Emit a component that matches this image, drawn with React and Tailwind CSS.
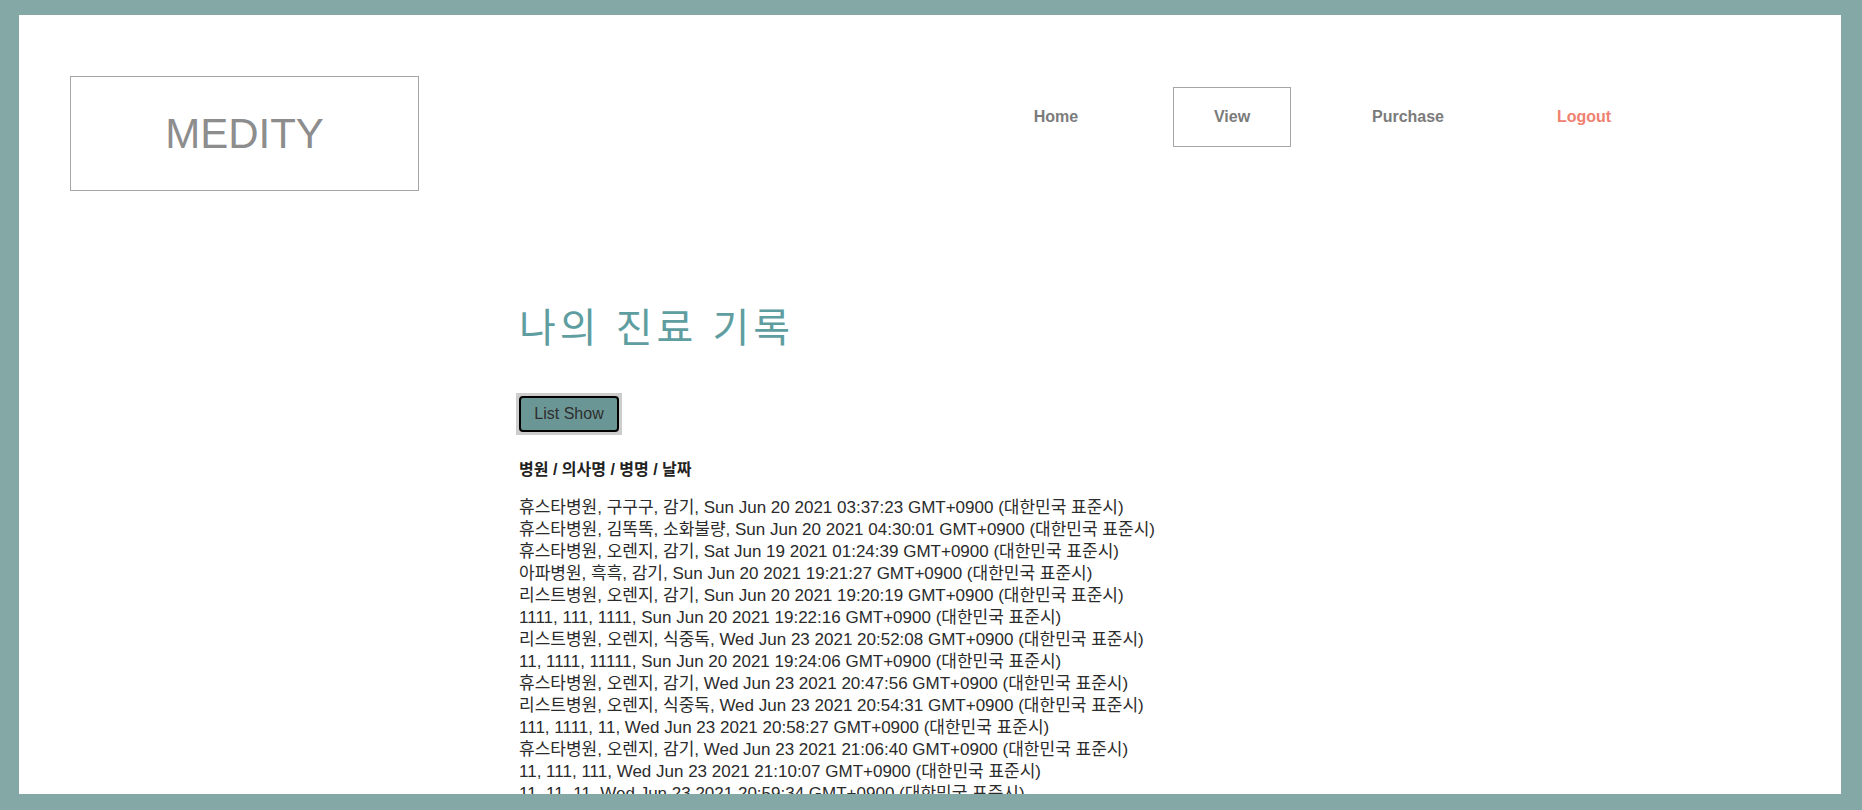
import React, { useState } from 'react';

const records = [
  '휴스타병원, 구구구, 감기, Sun Jun 20 2021 03:37:23 GMT+0900 (대한민국 표준시)',
  '휴스타병원, 김똑똑, 소화불량, Sun Jun 20 2021 04:30:01 GMT+0900 (대한민국 표준시)',
  '휴스타병원, 오렌지, 감기, Sat Jun 19 2021 01:24:39 GMT+0900 (대한민국 표준시)',
  '아파병원, 흑흑, 감기, Sun Jun 20 2021 19:21:27 GMT+0900 (대한민국 표준시)',
  '리스트병원, 오렌지, 감기, Sun Jun 20 2021 19:20:19 GMT+0900 (대한민국 표준시)',
  '1111, 111, 1111, Sun Jun 20 2021 19:22:16 GMT+0900 (대한민국 표준시)',
  '리스트병원, 오렌지, 식중독, Wed Jun 23 2021 20:52:08 GMT+0900 (대한민국 표준시)',
  '11, 1111, 11111, Sun Jun 20 2021 19:24:06 GMT+0900 (대한민국 표준시)',
  '휴스타병원, 오렌지, 감기, Wed Jun 23 2021 20:47:56 GMT+0900 (대한민국 표준시)',
  '리스트병원, 오렌지, 식중독, Wed Jun 23 2021 20:54:31 GMT+0900 (대한민국 표준시)',
  '111, 1111, 11, Wed Jun 23 2021 20:58:27 GMT+0900 (대한민국 표준시)',
  '휴스타병원, 오렌지, 감기, Wed Jun 23 2021 21:06:40 GMT+0900 (대한민국 표준시)',
  '11, 111, 111, Wed Jun 23 2021 21:10:07 GMT+0900 (대한민국 표준시)',
  '11, 11, 11, Wed Jun 23 2021 20:59:34 GMT+0900 (대한민국 표준시)',
  '휴스타병원, 오렌지, 감기, Wed Jun 23 2021 21:12:45 GMT+0900 (대한민국 표준시)',
];

const navItems = [
  { label: 'Home' },
  { label: 'View', active: true },
  { label: 'Purchase' },
  { label: 'Logout', logout: true },
];

const Header = () => {
  return (
    <header className="flex items-start pt-[61px] pl-[51px]">
      <div className="w-[349px] h-[115px] border border-[#a6a6a6] flex items-center justify-center">
        <span className="text-[42px] text-[#8d8d8d] leading-none">MEDITY</span>
      </div>
      <nav className="ml-auto mr-[198px] mt-[11px]">
        <ul className="flex gap-[58px]">
          {navItems.map((item) => (
            <li
              key={item.label}
              className={
                item.active
                  ? 'w-[118px] h-[60px] flex items-center justify-center border border-[#a6a6a6] font-bold text-[16px] text-[#7b7b7b] cursor-pointer'
                  : item.logout
                  ? 'w-[118px] h-[60px] flex items-center justify-center font-bold text-[16px] text-[#f0806f] cursor-pointer'
                  : 'w-[118px] h-[60px] flex items-center justify-center font-bold text-[16px] text-[#7b7b7b] cursor-pointer'
              }
            >
              {item.label}
            </li>
          ))}
        </ul>
      </nav>
    </header>
  );
};

const App = () => {
  const [show, setShow] = useState(true);

  return (
    <div
      className="h-screen overflow-hidden bg-[#84a8a6] pt-[15px] pl-[19px] pr-[21px] pb-[16px]"
      style={{ fontFamily: '"Liberation Sans", "Noto Sans CJK KR", sans-serif' }}
    >
      <div className="h-full bg-white overflow-hidden">
        <Header />

        <section className="pl-[500px] mt-[113px]">
          <h1 className="text-[40px] leading-[48px] text-[#5f9ea0] tracking-[4px] font-normal">
            나의 진료 기록
          </h1>

          <div className="mt-[41px] -ml-[3px] inline-block bg-[#cdcdcd] p-[3px]">
            <button
              className="block w-[100px] h-[36px] border-2 border-black rounded-[4px] bg-[#6a9795] text-[16px] text-[#2e2e2e]"
              onClick={() => setShow(!show)}
            >
              List Show
            </button>
          </div>

          <p className="mt-[24px] font-bold text-[16px] leading-[22px] text-[#222]">병원 / 의사명 / 병명 / 날짜</p>

          {show && (
            <ul className="mt-[16px] text-[17px] leading-[22px] text-[#2b2b2b]">
              {records.map((r, i) => (
                <li key={i}>{r}</li>
              ))}
            </ul>
          )}
        </section>
      </div>
    </div>
  );
};

export default App;
